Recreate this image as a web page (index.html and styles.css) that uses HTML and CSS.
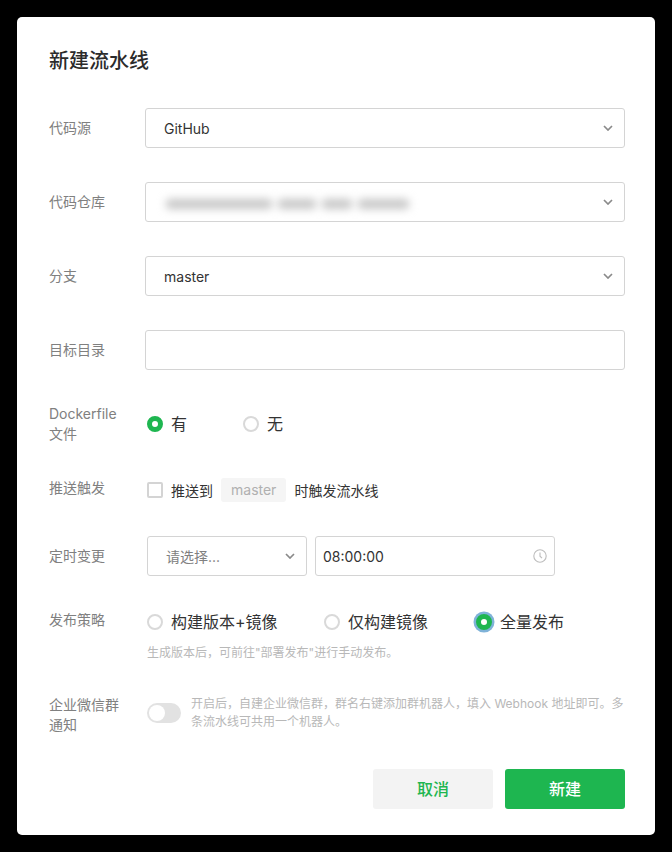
FILE: index.html
```html
<!DOCTYPE html>
<html lang="zh-CN">
<head>
<meta charset="utf-8">
<title>新建流水线</title>
<link rel="stylesheet" href="styles.css">
</head>
<body>
<div class="dialog">
  <h1 class="title">新建流水线</h1>

  <div class="row row-source">
    <div class="label">代码源</div>
    <div class="field select"><span class="value">GitHub</span>
      <svg class="chev" viewBox="0 0 10 6"><path d="M1 1l4 4 4-4"/></svg></div>
  </div>

  <div class="row row-input">
    <div class="label">代码仓库</div>
    <div class="field select"><span class="blurred"><i class="b b1"></i><i class="b b2"></i><i class="b b3"></i><i class="b b4"></i></span>
      <svg class="chev" viewBox="0 0 10 6"><path d="M1 1l4 4 4-4"/></svg></div>
  </div>

  <div class="row row-input">
    <div class="label">分支</div>
    <div class="field select"><span class="value">master</span>
      <svg class="chev" viewBox="0 0 10 6"><path d="M1 1l4 4 4-4"/></svg></div>
  </div>

  <div class="row row-input">
    <div class="label">目标目录</div>
    <div class="field"></div>
  </div>

  <div class="row row-docker">
    <div class="label label-two">Dockerfile<br>文件</div>
    <div class="options options-docker">
      <label class="opt opt-w96"><span class="radio on"></span><span>有</span></label>
      <label class="opt"><span class="radio"></span><span>无</span></label>
    </div>
  </div>

  <div class="row row-push">
    <div class="label label-push">推送触发</div>
    <div class="push">
      <span class="check"></span>
      <span class="push-text">推送到</span>
      <span class="chip">master</span>
      <span class="push-text">时触发流水线</span>
    </div>
  </div>

  <div class="row row-time">
    <div class="label">定时变更</div>
    <div class="time-fields">
      <div class="field select small"><span class="placeholder">请选择...</span>
        <svg class="chev chev-small" viewBox="0 0 10 6"><path d="M1 1l4 4 4-4"/></svg></div>
      <div class="field time"><span class="time-value">08:00:00</span>
        <svg class="clock" viewBox="0 0 14 14"><circle cx="7" cy="7" r="6.2"/><path d="M7 3.4v3.8l2 2"/></svg></div>
    </div>
  </div>

  <div class="row row-publish">
    <div class="label label-publish">发布策略</div>
    <div class="publish">
      <div class="options">
        <label class="opt opt-a"><span class="radio"></span><span>构建版本+镜像</span></label>
        <label class="opt opt-b"><span class="radio"></span><span>仅构建镜像</span></label>
        <label class="opt"><span class="radio on focus"></span><span>全量发布</span></label>
      </div>
      <p class="hint">生成版本后，可前往"部署发布"进行手动发布。</p>
    </div>
  </div>

  <div class="row row-notify">
    <div class="label label-two">企业微信群<br>通知</div>
    <div class="notify">
      <span class="toggle"><span class="knob"></span></span>
      <p class="notify-text">开启后，自建企业微信群，群名右键添加群机器人，填入 Webhook 地址即可。多条流水线可共用一个机器人。</p>
    </div>
  </div>

  <div class="actions">
    <button class="btn btn-cancel">取消</button>
    <button class="btn btn-primary">新建</button>
  </div>
</div>
</body>
</html>
```

FILE: styles.css
```css
* { box-sizing: border-box; }
html, body { margin: 0; padding: 0; height: 852px; overflow: hidden; }
body {
  background: #000;
  padding: 17px;
  font-family: Inter, "Noto Sans CJK SC", sans-serif;
  color: #333;
}
.dialog {
  width: 638px;
  height: 818px;
  background: #fff;
  border-radius: 5px;
  padding: 33px 30px 0 32px;
}
.title {
  margin: 0;
  font-size: 20px;
  line-height: 22px;
  font-weight: 500;
  color: #2b2b2b;
}
.row { display: flex; align-items: flex-start; }
.row-source { margin-top: 36px; }
.row-input { margin-top: 34px; }
.row-docker { margin-top: 34px; }
.row-push { margin-top: 34px; }
.row-time { margin-top: 34px; }
.row-publish { margin-top: 34px; }
.row-notify { margin-top: 32px; }
.label {
  flex: 0 0 96px;
  font-size: 14px;
  line-height: 20px;
  color: #808080;
  padding-top: 10px;
}
.label-two { padding-top: 0; }
.label-push { padding-top: 0; }
.label-publish { padding-top: 0; }
.field {
  position: relative;
  width: 480px;
  height: 40px;
  border: 1px solid #d4d4d4;
  border-radius: 3px;
  background: #fff;
  display: flex;
  align-items: center;
  font-size: 14px;
  color: #333;
}
.value { padding-left: 18px; }
.chev {
  position: absolute;
  right: 11px;
  top: 16px;
  width: 10px;
  height: 6px;
  fill: none;
  stroke: #8a8a8a;
  stroke-width: 1.7;
}
.blurred { display: flex; gap: 6px; padding-left: 20px; margin-top: 3px; filter: blur(4px); }
.b { display: block; height: 10px; background: #c6c6c6; border-radius: 4px; }
.b1 { width: 106px; }
.b2 { width: 38px; }
.b3 { width: 30px; }
.b4 { width: 51px; }
.options { display: flex; align-items: center; height: 20px; padding-left: 2px; }
.options-docker { margin-top: 10px; }
.opt {
  display: flex;
  align-items: center;
  gap: 8px;
  font-size: 16px;
  line-height: 20px;
  color: #333;
}
.opt-w96 { width: 96px; }
.opt-a { width: 177px; }
.opt-b { width: 152px; }
.radio {
  width: 16px;
  height: 16px;
  border-radius: 50%;
  border: 2px solid #d9d9d9;
  background: #fff;
  flex: none;
}
.radio.on { border: 5px solid #1eb650; }
.radio.focus { box-shadow: 0 0 0 2.5px #7fb2d8; }
.push { display: flex; align-items: center; height: 24px; padding-left: 2px; font-size: 14px; color: #333; }
.check {
  width: 16px;
  height: 16px;
  border: 2px solid #d4d4d4;
  border-radius: 2px;
  margin-right: 8px;
}
.chip {
  height: 24px;
  line-height: 24px;
  padding: 0 10px;
  margin: 0 8px;
  background: #f5f5f5;
  border-radius: 3px;
  color: #b0b0b0;
}
.time-fields { display: flex; gap: 8px; padding-left: 2px; }
.small { width: 160px; }
.placeholder { padding-left: 18px; color: #808080; }
.chev-small { right: 11px; }
.time { width: 240px; padding-left: 7px; }
.time-value { color: #333; }
.clock {
  position: absolute;
  right: 7px;
  top: 12px;
  width: 14px;
  height: 14px;
  fill: none;
  stroke: #bdbdbd;
  stroke-width: 1.1;
}
.publish { flex: 1; }
.row-publish .options { margin-top: 2px; }
.hint {
  margin: 11px 0 0;
  padding-left: 2px;
  font-size: 12px;
  line-height: 20px;
  color: #b8b8b8;
}
.notify { display: flex; align-items: flex-start; padding-left: 2px; width: 480px; }
.toggle {
  flex: none;
  margin-top: 8px;
  width: 34px;
  height: 20px;
  border-radius: 10px;
  background: #e2e2e2;
  padding: 2px;
  margin-right: 10px;
}
.knob { display: block; width: 16px; height: 16px; border-radius: 50%; background: #fff; }
.notify-text {
  margin: 0;
  font-size: 12px;
  line-height: 18px;
  color: #b8b8b8;
  width: 434px;
}
.actions { display: flex; justify-content: flex-end; gap: 12px; margin-top: 34px; }
.btn {
  width: 120px;
  height: 40px;
  border: 0;
  border-radius: 3px;
  padding: 0 0 2px;
  font-family: inherit;
  font-size: 16px;
  font-weight: 500;
}
.btn-cancel { background: #f3f3f3; color: #1eb650; }
.btn-primary { background: #1eb650; color: #fff; }
```
